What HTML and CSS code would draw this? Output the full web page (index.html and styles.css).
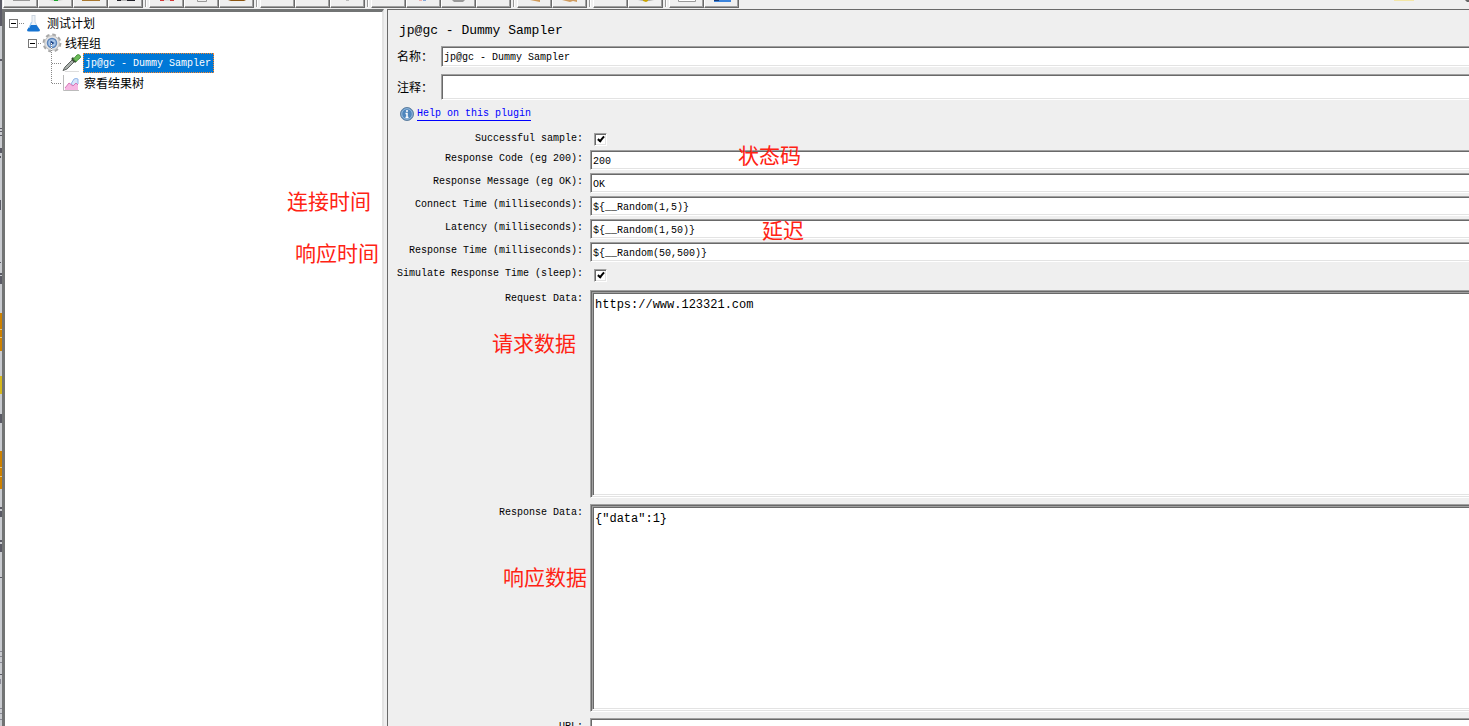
FILE: index.html
```
<!DOCTYPE html>
<html lang="zh-CN">
<head>
<meta charset="utf-8">
<title>jp@gc - Dummy Sampler</title>
<link rel="stylesheet" href="styles.css">
</head>
<body>
<div class="edge" aria-hidden="true">
  <svg width="2" height="726" viewBox="0 0 2 726">
    <path fill="#5b5b66" d="M0 0h2v26H0zM0 59h2v2H0zM0 128h2v1H0zM0 131h2v1H0zM0 135h2v1H0zM0 148h2v5H0zM0 156h1v2H0zM0 200h1v10H0zM0 262h1v1H0zM0 273h2v2H0zM0 276h2v8H0zM0 414h2v9H0zM0 507h2v2H0zM0 511h2v6H0zM0 540h2v2H0zM0 544h2v8H0zM0 577h2v1H0zM0 674h2v1H0z"/>
    <path fill="#8a8a96" d="M0 651h2v1H0zM0 656h2v1H0zM0 662h2v1H0zM0 679h1v5H0zM0 708h2v1H0zM0 713h2v1H0zM0 719h2v1H0z"/>
    <path fill="#ce8200" d="M0 313h2v38H0zM0 451h2v38H0z"/>
    <path fill="#d6b81c" d="M0 376h2v18H0z"/>
    <path fill="#e8c37c" d="M0 329h2v1H0zM0 337h2v1H0zM0 467h2v1H0zM0 476h2v1H0z"/>
  </svg>
</div>
<div class="window">
  <header class="toolbar">
    <div class="group">
      <button class="tool" aria-label="新建"><svg width="20" height="3"><path d="M2 0h17v1H2z" fill="#999"/></svg></button>
      <button class="tool" aria-label="模板"><svg width="20" height="3"><path d="M3 0h14l-5 1H8z" fill="#ccc"/><path d="M8 0h4v1H8z" fill="#19a52d"/></svg></button>
      <button class="tool" aria-label="打开"><svg width="20" height="3"><path d="M1 0h18v1H1z" fill="#a87830"/></svg></button>
      <button class="tool" aria-label="保存"><svg width="20" height="3"><path d="M1 0h18v1H1z" fill="#22222a"/><path d="M5 0h6v1H5z" fill="#bbb"/></svg></button>
    </div>
    <div class="group">
      <button class="tool" aria-label="剪切"><svg width="20" height="3"><path d="M3 0h4v1H3zM13 0h4v1h-4z" fill="#d33a3a"/><path d="M7 0h6v1H7z" fill="#ddd"/></svg></button>
      <button class="tool" aria-label="复制"><svg width="20" height="3"><path d="M5.500 0v1.500h9V0" fill="none" stroke="#999"/></svg></button>
      <button class="tool" aria-label="粘贴"><svg width="20" height="3"><path d="M1 0h18l-2 1H4z" fill="#8b5510"/></svg></button>
    </div>
    <div class="group">
      <button class="tool" aria-label="展开"></button>
      <button class="tool" aria-label="折叠"></button>
      <button class="tool" aria-label="切换"><svg width="20" height="3"><path d="M8 0h3v1H8z" fill="#bbb"/></svg></button>
    </div>
    <div class="group">
      <button class="tool" aria-label="启动"></button>
      <button class="tool" aria-label="立即启动"><svg width="20" height="3"><path d="M5 0h3v1H5z" fill="#eeb0b0"/><path d="M9 0h3v1H9z" fill="#86a8d8"/></svg></button>
      <button class="tool" aria-label="停止"><svg width="20" height="3"><path d="M3 0h13l-2 2H5z" fill="#999"/></svg></button>
      <button class="tool" aria-label="关闭"></button>
    </div>
    <div class="group">
      <button class="tool" aria-label="清除"><svg width="20" height="3"><path d="M5 0h10v2z" fill="#d09a58"/></svg></button>
      <button class="tool" aria-label="清除全部"><svg width="20" height="3"><path d="M2 0h15v2l-4-1-3 1z" fill="#cf9c60"/></svg></button>
    </div>
    <div class="group">
      <button class="tool" aria-label="查找"></button>
      <button class="tool" aria-label="重置"><svg width="20" height="3"><path d="M2 0h16l-5 1H7z" fill="#aaa"/><path d="M7 0h5v1l-2 1-3-1z" fill="#c8a400"/></svg></button>
    </div>
    <div class="group">
      <button class="tool" aria-label="函数助手"><svg width="20" height="3"><path d="M1.500 0v1.500h17V0" fill="#fff" stroke="#999"/></svg></button>
      <button class="tool" aria-label="帮助"><svg width="20" height="3"><path d="M2 0h17v2H2z" fill="#3b84dc"/><path d="M2 0h5v1H2z" fill="#173a77"/></svg></button>
    </div>
    <svg class="status" width="75" height="2" aria-hidden="true"><path d="M0 0h20v1H0z" fill="#f3e6a6"/><path d="M71 0h4v2h-2z" fill="#666"/></svg>
  </header>

  <div class="body">
    <nav class="tree" aria-label="测试计划">
      <ul class="level">
        <li>
          <div class="node">
            <button class="toggle" aria-label="折叠测试计划"></button><span class="link"></span>
            <svg class="icon" width="20" height="20" viewBox="0 0 20 20"><path d="M7.500 2.500h4M8 3v6l-4 8h11l-4-8V3" fill="#eef3f8" stroke="#cbd5df"/><path d="M6.500 12h6L16 17q0 1.500-2 1.500H5q-2 0-2-1.500z" fill="#1573d1"/><path d="M7.500 9L5 15" stroke="#9ccbf5"/></svg>
            <span class="name">测试计划</span>
          </div>
          <ul class="level child">
            <li>
              <div class="node">
                <button class="toggle" aria-label="折叠线程组"></button><span class="link short"></span>
                <svg class="icon" width="20" height="20" viewBox="0 0 20 20"><circle cx="10" cy="10" r="8.300" fill="none" stroke="#a8a8a8" stroke-width="2.200" stroke-dasharray="3.700 2.820"/><circle cx="10" cy="10" r="7.300" fill="#e2e2e2" stroke="#c0c0c0"/><circle cx="10" cy="10" r="4.500" fill="#a9c6e8" stroke="#5b84bb" stroke-width="1.500"/><path d="M8.500 7.500l4 2.500-4 2.500z" fill="#1d4588"/></svg>
                <span class="name">线程组</span>
              </div>
              <ul class="level leaves">
                <li class="node leaf"><span class="link leafline"></span>
                  <svg class="icon" width="20" height="20" viewBox="0 0 20 20"><path d="M4 18.500h14" stroke="#ddd"/><path d="M11 7l-7 7-2 3.500L6 16l7-7z" fill="#a9afab" stroke="#5d625f"/><path d="M11 5l4 4" stroke="#34492f" stroke-width="2.500"/><path d="M12.500 6l3.500-4q1.500-1 3 .5t0 2.500l-4 3.500z" fill="#6dbb5a" stroke="#4c9640"/></svg>
                  <span class="name selected">jp@gc - Dummy Sampler</span></li>
                <li class="node leaf"><span class="link leafline"></span>
                  <svg class="icon" width="20" height="20" viewBox="0 0 20 20"><path d="M2.500 2v15.500H18" fill="none" stroke="#bbb"/><path d="M10 11l3-5q2-1 4 0v5l-3 3z" fill="#d6e6fb" stroke="#93b6e8"/><path d="M4 17v-2l4-5 4 3 3-3 2 2v5z" fill="#f6b6e2"/><path d="M4 15l4-5 4 3 3-3 2 2" fill="none" stroke="#d678b8"/></svg>
                  <span class="name">察看结果树</span></li>
              </ul>
            </li>
          </ul>
        </li>
      </ul>
    </nav>
    <div class="splitter"></div>
    <main class="panel">
      <h1 class="title">jp@gc - Dummy Sampler</h1>
      <div class="heading">
        <label for="name">名称：</label><input class="field" id="name" value="jp@gc - Dummy Sampler">
        <label for="comment">注释：</label><input class="field tall" id="comment">
      </div>
      <p class="help">
        <svg width="14" height="14" viewBox="0 0 14 14"><circle cx="7" cy="7" r="6.500" fill="#4e86bd" stroke="#5f7f9f"/><circle cx="7" cy="7" r="5.300" fill="none" stroke="#a8c6e2" stroke-width=".8"/><path d="M7 3v2M5.500 6.500H7V10M5.500 10.500h3" fill="none" stroke="#fff" stroke-width="1.500"/></svg>
        <a href="#help">Help on this plugin</a>
      </p>
      <form class="form">
        <label for="ok">Successful sample:</label><input class="check" id="ok" type="checkbox" checked>
        <label for="code">Response Code (eg 200):</label><input class="field" id="code" value="200">
        <label for="msg">Response Message (eg OK):</label><input class="field" id="msg" value="OK">
        <label for="conn">Connect Time (milliseconds):</label><input class="field" id="conn" value="${__Random(1,5)}">
        <label for="lat">Latency (milliseconds):</label><input class="field" id="lat" value="${__Random(1,50)}">
        <label for="resp">Response Time (milliseconds):</label><input class="field" id="resp" value="${__Random(50,500)}">
        <label for="sleep">Simulate Response Time (sleep):</label><input class="check spaced" id="sleep" type="checkbox" checked>
        <label for="req">Request Data:</label><div class="well"><textarea id="req" spellcheck="false">https://www.123321.com</textarea></div>
        <label for="res">Response Data:</label><div class="well"><textarea id="res" spellcheck="false">{"data":1}</textarea></div>
        <label for="url">URL:</label><input class="field" id="url">
      </form>
    </main>
  </div>
</div>

<span class="note note-code">状态码</span>
<span class="note note-connect">连接时间</span>
<span class="note note-latency">延迟</span>
<span class="note note-response">响应时间</span>
<span class="note note-request">请求数据</span>
<span class="note note-data">响应数据</span>
</body>
</html>
```
FILE: styles.css
```
*, *::before, *::after { box-sizing: border-box; }

body {
  margin: 0;
  height: 100vh;
  display: flex;
  overflow: hidden;
  background: #efefef;
  color: #000;
  font: 10px/12px "Liberation Mono", "Noto Sans CJK SC", monospace;
}

ul, p, h1 { margin: 0; padding: 0; list-style: none; }

.edge { flex: none; width: 2px; overflow: hidden; background: #c9cbd0; }
.edge svg { display: block; }

.window { flex: 1; min-width: 0; display: flex; flex-direction: column; }

/* toolbar */
.toolbar {
  flex: none;
  position: relative;
  display: flex;
  gap: 6px;
  height: 9px;
  padding-left: 1px;
}
.group { display: flex; position: relative; height: 8px; }
.group + .group::before {
  content: "";
  position: absolute;
  left: -4px;
  top: 0;
  width: 2px;
  height: 7px;
  background: #999;
  border-right: 1px solid #fff;
}
.tool {
  display: flex;
  justify-content: center;
  width: 35px;
  height: 8px;
  padding: 0;
  background: #efefef;
  border: solid;
  border-width: 0 1px 1px 1px;
  border-color: #fff #696969 #696969 #fff;
  box-shadow: inset -1px -1px #a0a0a0;
}
.status { position: absolute; right: 0; top: 0; }

/* main split */
.body { flex: 1; min-height: 0; display: flex; }
.tree {
  flex: none;
  width: 382px;
  background: #fff;
  border: solid;
  border-width: 3px 2px 0 3px;
  border-color: #727474 #e3e3e3 #fff #727474;
  padding: 1px 0 0 4px;
}
.splitter { flex: none; width: 3px; background: #efefef; }

.node { display: flex; align-items: center; height: 20px; }
.child { padding-left: 19px; }
.leaves { padding-left: 23px; }
.toggle {
  flex: none;
  width: 9px;
  height: 9px;
  padding: 0;
  border: 1px solid #777;
  background: linear-gradient(#000, #000) center / 5px 1px no-repeat #fff;
}
.link {
  width: 6px;
  height: 1px;
  background: repeating-linear-gradient(90deg, #fff 0 1px, #888 1px 2px);
}
.link.short { width: 5px; }
.icon { flex: none; display: block; }
.name {
  height: 20px;
  padding: 2px 3px 0;
  font-size: 12px;
  line-height: 20px;
  white-space: nowrap;
}
.leaf { position: relative; }
.leaf::before {
  content: "";
  position: absolute;
  left: 0;
  top: -10px;
  width: 1px;
  height: 20px;
  background: repeating-linear-gradient(#fff 0 1px, #888 1px 2px);
}
.link.leafline { width: 10px; }
.name.selected {
  font-size: 10px;
  line-height: 18px;
  background: #0078d7;
  color: #fff;
  border: 1px dotted #ff8728;
  padding: 1px 2px 0 1px;
  margin-left: 2px;
}

/* editor panel */
.panel {
  flex: 1;
  min-width: 0;
  overflow: hidden;
  border: solid #696969;
  border-width: 1px 0 0 1px;
  padding: 10px 0 0 9px;
}
.title { font-size: 13px; line-height: 22px; font-weight: 400; padding-left: 2px; }

.heading {
  display: grid;
  grid-template-columns: 36px 1fr;
  column-gap: 8px;
  row-gap: 7px;
  align-items: center;
  margin-top: 4px;
}
.heading label { font-size: 12px; line-height: 16px; padding-top: 3px; white-space: nowrap; }

.field {
  display: block;
  width: 100%;
  min-width: 0;
  height: 21px;
  margin: 0;
  padding: 2px 0 0 2px;
  border: solid;
  border-width: 1px 0 1px 1px;
  border-color: #a0a0a0 #fff #fff #a0a0a0;
  box-shadow: inset 1px 1px #696969, inset 0 -1px #e3e3e3;
  background: #fff;
  color: #000;
  font: inherit;
  outline: none;
}
.field.tall { height: 26px; }

.help { display: flex; align-items: center; gap: 3px; height: 16px; margin: 6px 0 0 3px; }
.help a { color: #00f; text-decoration: none; border-bottom: 1px solid #00f; }

.form {
  display: grid;
  grid-template-columns: auto 1fr;
  column-gap: 7px;
  row-gap: 3px;
  margin-top: 8px;
}
.form label { text-align: right; white-space: nowrap; padding-top: 3px; }
.form .field { height: 20px; }

.check {
  appearance: none;
  width: 13px;
  height: 13px;
  margin: 3px 0 1px 4px;
  border: 1px solid;
  border-color: #a0a0a0 #fff #fff #a0a0a0;
  box-shadow: inset 1px 1px #696969, inset -1px -1px #e3e3e3;
  background: #fff;
  position: relative;
}
.check:checked::after {
  content: "";
  position: absolute;
  left: 4px;
  top: 1px;
  width: 4px;
  height: 7px;
  border: solid #000;
  border-width: 0 2px 2px 0;
  transform: rotate(40deg);
}
.check.spaced { margin: 4px 0 5px 4px; }

.well {
  height: 208px;
  margin-bottom: 3px;
  border: solid;
  border-width: 1px 0 1px 1px;
  border-color: #a0a0a0 #fff #fff #a0a0a0;
  box-shadow: inset 1px 1px #696969, inset 0 -1px #e3e3e3;
  padding: 1px 0 1px 1px;
}
.well textarea {
  display: block;
  width: 100%;
  height: 100%;
  margin: 0;
  padding: 4px 0 0 2px;
  border: solid;
  border-width: 1px 0 1px 1px;
  border-color: #a0a0a0 #fff #fff #a0a0a0;
  box-shadow: inset 1px 1px #696969, inset 0 -1px #e3e3e3;
  background: #fff;
  color: #000;
  font: 12px/16px "Liberation Mono", monospace;
  resize: none;
  outline: none;
}

/* red annotations laid over the window */
.note {
  position: absolute;
  color: #ff2314;
  font: 21px/28px "Noto Sans CJK SC", sans-serif;
  white-space: nowrap;
}
.note-code { left: 738px; top: 140px; }
.note-connect { left: 287px; top: 186px; }
.note-latency { left: 762px; top: 215px; }
.note-response { left: 295px; top: 238px; }
.note-request { left: 492px; top: 328px; }
.note-data { left: 503px; top: 562px; }
```
